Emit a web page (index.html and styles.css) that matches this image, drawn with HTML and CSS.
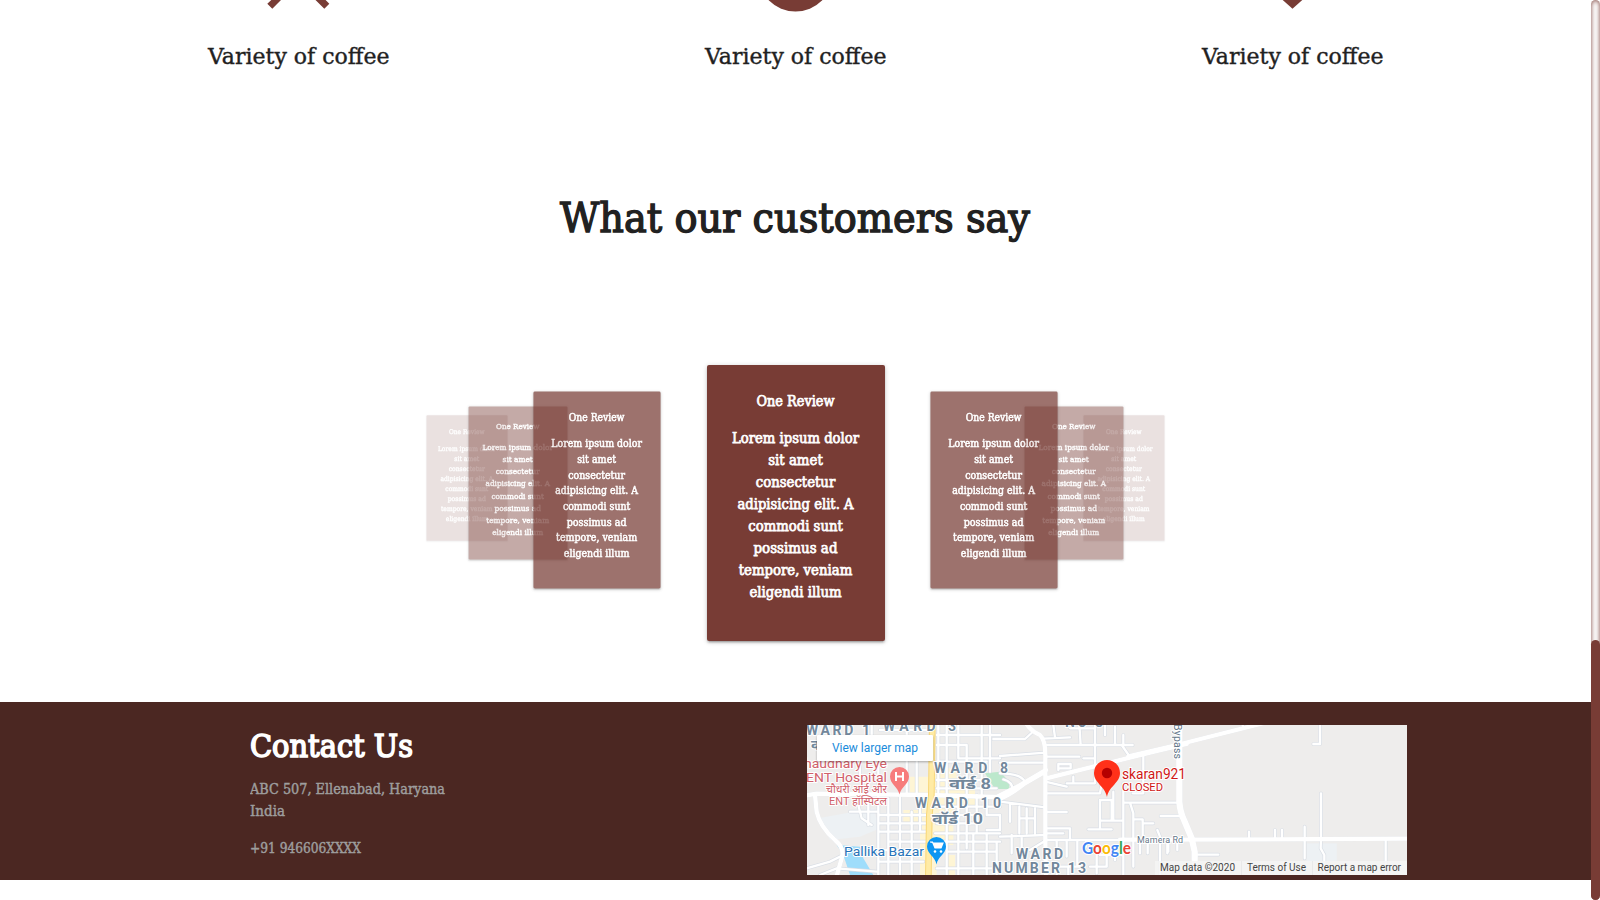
FILE: index.html
```html
<!DOCTYPE html>
<html lang="en">
<head>
<meta charset="utf-8">
<title>Coffee</title>
<link rel="stylesheet" href="styles.css">
</head>
<body>
<div class="page">
  <main class="content">
    <section class="features">
      <div class="feature">
        <svg class="feature-icon" width="76" height="12" viewBox="0 0 76 12"><path d="M10.300 0L6.300 3.700L11.300 8.700L20 0ZM54.500 0L63.300 8.700L68.300 3.700L64.600 0Z"/></svg>
        <svg class="label" width="182" height="40"><text x="0" y="28.500" textLength="181.500" lengthAdjust="spacingAndGlyphs">Variety of coffee</text></svg>
      </div>
      <div class="feature">
        <svg class="feature-icon" width="76" height="12" viewBox="0 0 76 12"><circle cx="37.500" cy="-26" r="37.500"/></svg>
        <svg class="label" width="182" height="40"><text x="0" y="28.500" textLength="181.500" lengthAdjust="spacingAndGlyphs">Variety of coffee</text></svg>
      </div>
      <div class="feature">
        <svg class="feature-icon" width="76" height="12" viewBox="0 0 76 12"><path d="M27.700 0L37.500 8.700L47.300 0Z"/></svg>
        <svg class="label" width="182" height="40"><text x="0" y="28.500" textLength="181.500" lengthAdjust="spacingAndGlyphs">Variety of coffee</text></svg>
      </div>
    </section>
    <h2 class="heading"><svg width="470" height="70"><text x="-1" y="42" textLength="470" lengthAdjust="spacingAndGlyphs">What our customers say</text></svg></h2>
    <section class="carousel" id="carousel"></section>
    <footer class="footer">
      <div class="contact">
        <svg width="220" height="178">
          <text class="contact-title" x="0" y="55" textLength="163" lengthAdjust="spacingAndGlyphs">Contact Us</text>
          <text x="0" y="92" textLength="195" lengthAdjust="spacingAndGlyphs">ABC 507, Ellenabad, Haryana</text>
          <text x="0" y="114" textLength="35" lengthAdjust="spacingAndGlyphs">India</text>
          <text x="0" y="151" textLength="111" lengthAdjust="spacingAndGlyphs">+91 946606XXXX</text>
        </svg>
      </div>
      <svg class="map" width="600" height="150" viewBox="0 0 600 150">
        <defs>
          <g id="west">
            <path class="major" d="M0 244L50 236L385 240L590 246L650 216L738 165M45 240L50 290Q60 335 105 375Q135 400 125 430L108 490"/>
            <path d="M215 30V120M240 45H390M180 85V180M150 290H230M175 270L185 310L215 330M205 250V330M235 120V480M265 250V480M300 240V480M335 290V480M360 250V350M235 300H385M235 325H385M235 350H385M265 380H385M240 405H370M235 440H370M320 30V235M350 130V235M20 460L90 440L130 420M60 480L110 460L230 470"/>
            <path d="M415 30V240M440 30V480M475 30V130M475 240V480M500 90V400M545 30V240M570 30V170M410 60H600M410 90H500M475 130H600M410 140H560M410 195H560M410 220H590M530 240V355M560 245V300H600V345H560M410 275H600M410 300H520M410 325H530M405 355H600M430 380H600M440 410H590M520 355V480M560 355V480M590 380V480M410 460H590"/>
          </g>
          <g id="middle">
            <path class="major" d="M70 -5Q85 30 120 45Q136 60 136 105V360L138 480M0 236Q30 225 75 190L136 155M136 176L280 140L450 98L560 72"/>
            <path d="M-20 57H75L98 36M0 108L136 98M0 128H136M0 160Q60 160 75 185M10 178Q40 185 38 215M0 245L136 262M136 75H398M130 56L210 52M160 15L165 52M238 15L242 75M210 25H285M285 15V190H200M315 15V45M345 20V75H370V45M365 75L388 108M136 110H238M250 115H285M175 150V132H212V145H180M136 185L200 200M220 170V190M136 220H300L305 190M430 105V220H398M370 190V465M375 248H530M300 240V325M300 240H335V302M340 215V302M300 302H370M265 328H335M136 276H200M136 325H210V355M136 340H190M136 360H410M30 255V305M58 260V340M80 265V340M105 265V340M58 295H105M0 350L136 345M35 345V400M65 350V400M136 362L90 390M170 365V390M200 365V410M232 365V435M258 365V380M290 380V460M320 380V440M345 390V420M300 405H370M160 440H245M270 440H320M170 430V465M205 440V465M390 248L400 280V440M400 298H428V360M428 310H460M482 288H540M420 365V400M443 365V400M472 330L480 350V465M502 370V400"/>
          </g>
          <g id="east">
            <path class="trunk" d="M238 30V260Q240 290 252 315L275 370L284 410V490"/>
            <path class="major" d="M60 374H270L930 371M85 124L230 90L500 22"/>
            <path d="M424 22L430 36M660 30V87H640M663 235V370L662 400L673 420V480M614 335V430M447 350V370M525 345V370M546 345V370M857 375V480M205 385V410M232 385V405M294 419H355"/>
          </g>
        </defs>
        <rect width="600" height="150" fill="#eeedec"/>
        <g transform="translate(-7 -10) scale(.33333)">
          <path d="M55 310L220 280L240 340L180 365L90 375Z" fill="#edf1f4"/>
          <path d="M110 390L180 395L190 430L220 480H150L130 420Z" fill="#9fddfb"/>
          <path d="M330 185H405V160H470V220H525V275H460V390H410V480H360V330H310V285H360V235H330ZM445 420H465V480H445Z" fill="#fef5d5"/>
          <path d="M555 175L600 170L628 200V222H585Z" fill="#bce8cc"/>
          <use href="#west" class="road-edge"/>
        </g>
        <use href="#middle" class="road-edge" transform="translate(193 -5) scale(.33333)"/>
        <g transform="translate(293 -10) scale(.33333)">
          <path d="M620 385H710V440H620Z" fill="#edf1f4"/>
          <use href="#east" class="road-edge"/><use href="#east" class="road"/>
        </g>
        <use href="#middle" class="road" transform="translate(193 -5) scale(.33333)"/>
        <g transform="translate(-7 -10) scale(.33333)">
          <use href="#west" class="road"/>
          <path d="M397 20L394 240L388 300L385 490" class="highway-edge"/>
          <path d="M397 20L394 240L388 300L385 490" class="highway"/>
        </g>
        <g class="ward">
          <text x="-1" y="10" textLength="64">WARD 1</text>
          <text x="76" y="6" textLength="73">WARD 3</text>
          <text x="4" y="25">वॉ</text>
          <text x="258" y="2" textLength="38">NO 8</text>
          <text x="127" y="48" textLength="74">WARD 8</text>
          <text class="hindi" x="142" y="64" textLength="42" lengthAdjust="spacingAndGlyphs">वॉर्ड 8</text>
          <text x="108" y="83" textLength="86">WARD 10</text>
          <text class="hindi" x="125" y="99" textLength="51" lengthAdjust="spacingAndGlyphs">वॉर्ड 10</text>
          <text x="209" y="134" textLength="47">WARD</text>
          <text x="185" y="148" textLength="94">NUMBER 13</text>
        </g>
        <g class="hospital">
          <text x="-3" y="43" textLength="83" lengthAdjust="spacingAndGlyphs">haudhary Eye</text>
          <text x="-1" y="57" textLength="81" lengthAdjust="spacingAndGlyphs">ENT Hospital</text>
          <text class="small" x="19" y="68" textLength="61" lengthAdjust="spacingAndGlyphs">चौधरी आई और</text>
          <text class="small" x="22" y="80" textLength="58" lengthAdjust="spacingAndGlyphs">ENT हॉस्पिटल</text>
        </g>
        <path d="M92.500 69.500C91 62 83 59 83 51.500A9.500 9.500 0 0 1 102 51.500C102 59 94 62 92.500 69.500Z" fill="#f77c7c"/>
        <path d="M89 47V56M96 47V56M89 51.500H96" stroke="#fff" stroke-width="2" fill="none"/>
        <text class="shop" x="37" y="131" textLength="80" lengthAdjust="spacingAndGlyphs">Pallika Bazar</text>
        <path d="M129.500 139.500C128 131 120 129 120 121.500A9.500 9.500 0 0 1 139 121.500C139 129 131 131 129.500 139.500Z" fill="#0c96f2"/>
        <path d="M123 117H125.500L128 123H134L136 118H126" fill="#fff" stroke="#fff" stroke-width="1.200"/><circle cx="128" cy="126.500" r="1.300" fill="#fff"/><circle cx="134" cy="126.500" r="1.300" fill="#fff"/>
        <path d="M300 72C298 61 287 58 287 48A13 13 0 0 1 313 48C313 58 302 61 300 72Z" fill="#ff3119"/><circle cx="300" cy="48" r="5.200" fill="#b40000"/>
        <text class="pin-name" x="315" y="54" textLength="64" lengthAdjust="spacingAndGlyphs">skaran921</text>
        <text class="pin-state" x="315" y="66" textLength="41" lengthAdjust="spacingAndGlyphs">CLOSED</text>
        <text class="street" transform="translate(367 -1) rotate(90)" textLength="35">Bypass</text>
        <text class="street small-street" x="330" y="118" textLength="46">Mamera Rd</text>
        <text class="google" x="275" y="129" textLength="49" lengthAdjust="spacingAndGlyphs"><tspan fill="#4285f4">G</tspan><tspan fill="#ea4335">o</tspan><tspan fill="#fbbc05">o</tspan><tspan fill="#4285f4">g</tspan><tspan fill="#34a853">l</tspan><tspan fill="#ea4335">e</tspan></text>
        <path d="M348 136H600V150H348Z" fill="#f5f5f5" opacity=".8"/>
        <path d="M434.500 136V150M505.500 136V150" stroke="#e9e9e9"/>
        <g class="legal">
          <text x="353" y="146" textLength="75">Map data ©2020</text>
          <text x="440" y="146" textLength="59">Terms of Use</text>
          <text x="510.500" y="146" textLength="83.500">Report a map error</text>
        </g>
        <rect class="map-button" x="10" y="10" width="116" height="26" rx="1"/>
        <text class="map-link" x="25" y="27" textLength="86">View larger map</text>
      </svg>
    </footer>
  </main>
  <div class="scrollbar"><div class="thumb"></div></div>
</div>
<script src="carousel.js"></script>
</body>
</html>
```

FILE: styles.css
```css
body { margin: 0; background: #fff; overflow: hidden; }
.page { display: flex; width: 1600px; height: 900px; }
.content { width: 1591px; height: 900px; font-family: "DejaVu Serif", serif; }
svg { display: block; }
.features { display: grid; grid-template-columns: repeat(3, 497px); justify-content: center; height: 80px; }
.feature { display: flex; flex-direction: column; align-items: center; gap: 23px; }
.feature-icon { fill: #783c35; }
.label { overflow: visible; fill: #212121; stroke: #212121; stroke-width: .4px; font-size: 23px; }
.heading { display: flex; justify-content: center; margin: 0; padding-top: 110px; height: 155px; }
.heading svg { overflow: visible; fill: #212121; stroke: #212121; stroke-width: 1.4px; font-size: 40.5px; font-weight: 400; }
.carousel { position: relative; height: 357px; }
.card { position: absolute; background: #783c35; border-radius: 2px; box-shadow: 0 2px 2px rgba(0,0,0,.14), 0 3px 1px -2px rgba(0,0,0,.12), 0 1px 5px rgba(0,0,0,.2); }
.card text { fill: #fff; stroke: #fff; stroke-width: .75px; font-size: 14.5px; text-anchor: middle; }
.footer { display: flex; height: 178px; background: #4b2722; }
.contact { box-sizing: border-box; width: 807px; padding-left: 250px; font-size: 14px; fill: #9e9e9e; stroke: #9e9e9e; stroke-width: .45px; }
.contact-title { fill: #fff; font-size: 31px; stroke: #fff; stroke-width: 1.6px; }
.map { margin-top: 23px; overflow: hidden; font-family: Roboto, "Noto Sans", sans-serif; }
.road-edge, .road { fill: none; stroke-linejoin: round; stroke-linecap: round; }
.road-edge { stroke: #d9dee5; stroke-width: 11px; }
.road { stroke: #fff; stroke-width: 7px; }
.major { stroke-width: 13px; }
.trunk { stroke-width: 19px; }
.highway, .highway-edge { fill: none; stroke: #ffeba5; stroke-width: 14px; }
.highway-edge { stroke: #f9d777; stroke-width: 20px; }
.map text { paint-order: stroke; stroke: #fff; stroke-width: 2px; stroke-linejoin: round; }
.ward { fill: #72879b; font-size: 14px; font-weight: 700; }
.ward .hindi { font-size: 15px; }
.hospital { fill: #d0606a; font-size: 13.5px; }
.hospital .small { font-size: 11.5px; }
.map .shop { fill: #2873b8; font-size: 13.5px; }
.map .pin-name { fill: #d01716; font-size: 14px; }
.map .pin-state { fill: #d01716; font-size: 10.5px; }
.street { fill: #66788a; font-size: 10.5px; }
.small-street { font-size: 9px; }
.google { font-family: Lato, sans-serif; font-size: 17px; font-weight: 700; }
.map .legal text { fill: #444; font-size: 10px; stroke: none; }
.map-button { fill: #fff; filter: drop-shadow(0 1px 1px rgba(0,0,0,.3)); }
.map .map-link { fill: #1a8bdb; font-size: 12px; stroke: none; }
.scrollbar { display: flex; align-items: flex-end; width: 9px; height: 900px; border-radius: 5px; background: #fff; box-shadow: inset 0 0 5px #783c35; }
.thumb { width: 9px; height: 260px; border-radius: 5px; background: #783c35; }
```

FILE: carousel.js
```js
const lines = [
  ["One Review", 78, 41],
  ["Lorem ipsum dolor", 127, 78],
  ["sit amet", 54.5, 100],
  ["consectetur", 79.5, 122],
  ["adipisicing elit. A", 116, 144],
  ["commodi sunt", 94.5, 166],
  ["possimus ad", 84, 188],
  ["tempore, veniam", 113.5, 210],
  ["eligendi illum", 92, 232]
];
// Centre x, centre y inside the carousel, scale, opacity; farthest cards first.
const cards = [
  [467.2, 133, .455, .15], [1124, 133, .455, .15],
  [517.5, 137.7, .555, .43], [1073.5, 137.7, .555, .43],
  [597.4, 145, .714, .72], [993.6, 145, .714, .72],
  [795.5, 158, 1, 1]
];
const text = lines.map(([words, width, y]) =>
  `<text x="88.5" y="${y}" textLength="${width}" lengthAdjust="spacingAndGlyphs">${words}</text>`).join("");
document.getElementById("carousel").innerHTML = cards.map(([x, y, scale, opacity]) =>
  `<article class="card" style="left:${x}px;top:${y}px;opacity:${opacity};transform:translate(-50%,-50%) scale(${scale})"><svg width="178" height="276">${text}</svg></article>`).join("");
```
